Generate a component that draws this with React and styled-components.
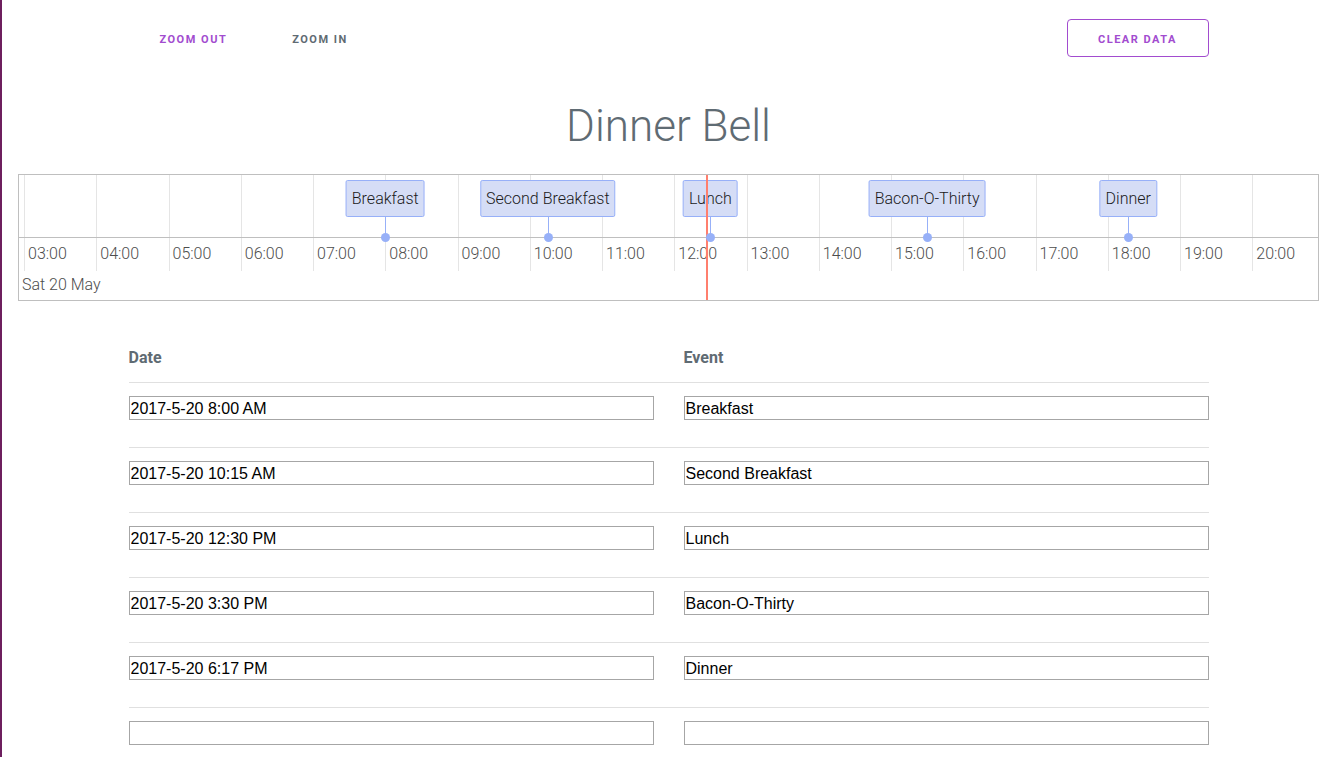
import React from "react";
import styled, { createGlobalStyle } from "styled-components";

const HOUR_WIDTH = 72.25;
const START_HOUR = 3;
const ORIGIN = 5;

const hours = Array.from({ length: 18 }, (_, i) => START_HOUR + i);

const events = [
  { date: "2017-5-20 8:00 AM", name: "Breakfast", at: 8 },
  { date: "2017-5-20 10:15 AM", name: "Second Breakfast", at: 10.25 },
  { date: "2017-5-20 12:30 PM", name: "Lunch", at: 12.5 },
  { date: "2017-5-20 3:30 PM", name: "Bacon-O-Thirty", at: 15.5 },
  { date: "2017-5-20 6:17 PM", name: "Dinner", at: 18 + 17 / 60 },
];

const toX = (h) => ORIGIN + (h - START_HOUR) * HOUR_WIDTH;
const pad = (n) => (n < 10 ? "0" + n : "" + n);

const App = () => {
  return (
    <>
      <GlobalStyle />
      <Page>
        <Header>
          <TextButton $active>Zoom Out</TextButton>
          <TextButton>Zoom In</TextButton>
          <Spacer />
          <OutlineButton>Clear Data</OutlineButton>
        </Header>

        <Title>Dinner Bell</Title>

        <Timeline>
          <Center>
            {hours.map((h) => (
              <GridLine key={h} style={{ left: toX(h) }} />
            ))}
            {events.map((ev) => (
              <Item key={ev.name} style={{ left: toX(ev.at) }}>
                <ItemBox>{ev.name}</ItemBox>
                <ItemLine />
                <ItemDot />
              </Item>
            ))}
          </Center>
          <Axis>
            {hours.map((h) => (
              <Tick key={h} style={{ left: toX(h) }}>
                {pad(h)}:00
              </Tick>
            ))}
            <MajorLabel>Sat 20 May</MajorLabel>
          </Axis>
          <CurrentTime style={{ left: toX(12.44) }} />
        </Timeline>

        <Table>
          <HeadRow>
            <HeadCell>Date</HeadCell>
            <HeadCell>Event</HeadCell>
          </HeadRow>
          {[...events, { date: "", name: "" }].map((ev, i) => (
            <Row key={i}>
              <Field defaultValue={ev.date} />
              <Field defaultValue={ev.name} />
            </Row>
          ))}
        </Table>
      </Page>
    </>
  );
};

export default App;

//스타일

const GlobalStyle = createGlobalStyle`
  html, body {
    margin: 0;
    background: #fff;
    font-family: Roboto, "Liberation Sans", sans-serif;
  }
`;

const Page = styled.div`
  border-left: 2px solid #6d1f5e;
  padding: 0 13px 0 16px;
  min-height: 757px;
  box-sizing: border-box;
  overflow: hidden;
`;

const Header = styled.div`
  display: flex;
  align-items: center;
  max-width: 1080px;
  margin: 0 auto;
  padding-top: 19px;
`;

const Spacer = styled.div`
  flex: 1;
`;

const TextButton = styled.button`
  background: none;
  border: none;
  height: 38px;
  padding: 3px 32px 0 31px;
  margin-right: 2px;
  font-family: Roboto, sans-serif;
  font-size: 11px;
  font-weight: 700;
  letter-spacing: 1.5px;
  text-transform: uppercase;
  color: ${(p) => (p.$active ? "#a24ccf" : "#5f6b73")};
  cursor: pointer;
`;

const OutlineButton = styled.button`
  background: #fff;
  border: 1px solid #a24ccf;
  border-radius: 4px;
  width: 142px;
  height: 38px;
  padding: 3px 0 0;
  font-family: Roboto, sans-serif;
  font-size: 11px;
  font-weight: 700;
  letter-spacing: 1.5px;
  text-transform: uppercase;
  color: #a24ccf;
  cursor: pointer;
`;

const Title = styled.h1`
  margin: 41px 0 20px;
  text-align: center;
  font-family: Roboto, sans-serif;
  font-weight: 300;
  font-size: 44px;
  line-height: 56px;
  color: #5f6b73;
`;

const Timeline = styled.div`
  position: relative;
  border: 1px solid #bfbfbf;
  overflow: hidden;
  font-family: Roboto, sans-serif;
  font-weight: 300;
`;

const Center = styled.div`
  position: relative;
  height: 62px;
`;

const GridLine = styled.div`
  position: absolute;
  top: 0;
  bottom: 0;
  width: 1px;
  background: #e5e5e5;
`;

const Item = styled.div`
  position: absolute;
  top: 5px;
  bottom: 0;
  width: 0;
`;

const ItemBox = styled.div`
  position: absolute;
  top: 0;
  left: 0;
  transform: translateX(-50%);
  white-space: nowrap;
  padding: 8px 5px 7px;
  line-height: 20px;
  font-size: 16px;
  color: #1a1a1a;
  background: #d5ddf6;
  border: 1px solid #97b0f8;
  border-radius: 2px;
`;

const ItemLine = styled.div`
  position: absolute;
  top: 36px;
  bottom: 0;
  left: 0;
  width: 1px;
  background: #97b0f8;
`;

const ItemDot = styled.div`
  position: absolute;
  bottom: -5px;
  left: -4px;
  width: 9px;
  height: 9px;
  border-radius: 50%;
  background: #97b0f8;
  z-index: 2;
`;

const Axis = styled.div`
  position: relative;
  height: 62px;
  border-top: 1px solid #bfbfbf;
`;

const Tick = styled.div`
  position: absolute;
  top: 0;
  height: 33px;
  border-left: 1px solid #e5e5e5;
  padding: 6px 0 0 3px;
  box-sizing: border-box;
  font-size: 16px;
  line-height: 19px;
  color: #4d4d4d;
  white-space: nowrap;
`;

const MajorLabel = styled.div`
  position: absolute;
  left: 3px;
  top: 37px;
  font-size: 16px;
  line-height: 19px;
  color: #4d4d4d;
`;

const CurrentTime = styled.div`
  position: absolute;
  top: 0;
  bottom: 0;
  width: 2px;
  background: #ff7f6e;
  z-index: 1;
`;

const Table = styled.div`
  max-width: 1080px;
  margin: 30px auto 0;
`;

const HeadRow = styled.div`
  display: grid;
  grid-template-columns: 1fr 1fr;
  column-gap: 30px;
  padding: 18px 0 15px;
  border-bottom: 1px solid #e0e0e0;
`;

const HeadCell = styled.div`
  line-height: 18px;
  font-family: Roboto, sans-serif;
  font-size: 16px;
  font-weight: 700;
  color: #5f6b73;
`;

const Row = styled.div`
  display: grid;
  grid-template-columns: 1fr 1fr;
  column-gap: 30px;
  padding: 13px 0 27px;
  border-bottom: 1px solid #e0e0e0;
`;

const Field = styled.input`
  display: block;
  width: 100%;
  height: 24px;
  box-sizing: border-box;
  border: 1px solid #a6a6a6;
  padding: 1px 1px 0;
  font-family: "Liberation Sans", Arial, sans-serif;
  font-size: 16px;
  color: #000;
  background: #fff;
  outline: none;
`;
